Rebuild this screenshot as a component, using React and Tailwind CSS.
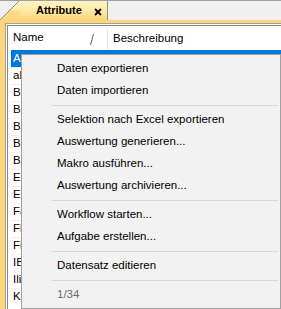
import { Fragment } from "react";

const rows = [
  "Abteilung",
  "alias",
  "Bearbeiter",
  "Bemerkung",
  "Benutzer",
  "Betreff",
  "Bezeichnung",
  "Eingang",
  "Evaluation",
  "Fachbereich",
  "Filiale",
  "Firma",
  "IBAN",
  "Ilias",
  "Kategorie",
];

const menu = [
  { label: "Daten exportieren" },
  { label: "Daten importieren" },
  { sep: true },
  { label: "Selektion nach Excel exportieren" },
  { label: "Auswertung generieren..." },
  { label: "Makro ausführen..." },
  { label: "Auswertung archivieren..." },
  { sep: true },
  { label: "Workflow starten..." },
  { label: "Aufgabe erstellen..." },
  { sep: true },
  { label: "Datensatz editieren" },
  { sep: true },
  { label: "1/34", disabled: true },
];

function App() {
  return (
    <Fragment>
      <div
        className="relative w-[281px] h-[309px] overflow-hidden bg-[#f0f0f0] flex flex-col text-[11.5px] text-black"
        style={{ fontFamily: '"Liberation Sans", Arial, sans-serif' }}
      >
        {/* tab strip */}
        <div className="flex h-[20px] shrink-0 border-t border-[#a0a0a0]">
          <svg width="20" height="19" viewBox="0 0 20 19" className="block shrink-0">
            <defs>
              <linearGradient id="tabg" x1="0" y1="0" x2="0" y2="1">
                <stop offset="0" stopColor="#fff3c4" />
                <stop offset="0.45" stopColor="#ffeaa8" />
                <stop offset="0.55" stopColor="#fedc88" />
                <stop offset="1" stopColor="#fdd67a" />
              </linearGradient>
            </defs>
            <polygon points="0,19 19,0 20,0 20,19" fill="url(#tabg)" />
            <line x1="0" y1="19" x2="19" y2="0" stroke="#8c8c8c" strokeWidth="1" />
          </svg>
          <div className="w-[88px] h-[19px] flex items-center bg-linear-to-b from-[#fff3c4] via-[#ffe8a4] to-[#fdd67a] border-r border-[#8c8c8c] pl-[16px]">
            <span className="font-bold text-[11px]">Attribute</span>
            <svg width="8" height="8" viewBox="0 0 8 8" className="ml-[12px] mt-[2px]">
              <path d="M1 1L7 7M7 1L1 7" stroke="#000" strokeWidth="1.8" />
            </svg>
          </div>
          <div className="flex-1" />
        </div>

        {/* yellow frame */}
        <div className="flex-1 bg-[#fdd67a] pt-[3px] pl-[5px] flex flex-col">
          <div className="flex-1 border-t border-l border-[#a0a0a0] bg-white pt-px pl-px flex flex-col">
            <div className="flex-1 border-t border-l border-[#828790] bg-white pl-[3px] flex flex-col">
              {/* header */}
              <div className="h-[24px] flex items-center shrink-0">
                <div className="w-[96px] h-full flex items-center pl-[2px] relative">
                  <span>Name</span>
                  <svg width="4" height="11" viewBox="0 0 4 11" className="absolute left-[79px] top-[8px]">
                    <line x1="3.5" y1="0" x2="0.5" y2="11" stroke="#606060" strokeWidth="1" />
                  </svg>
                </div>
                <div className="h-[21px] self-end border-l border-[#e5e5e5] pl-[5px] flex items-center -mt-[3px]">
                  <span className="-mt-[2px]">Beschreibung</span>
                </div>
              </div>
              {/* rows: only the first letters show left of the menu */}
              {rows.map((r, i) => (
                <div
                  key={i}
                  className={
                    i === 0
                      ? "h-[17px] shrink-0 flex items-center pl-[2px] bg-[#0078d7] text-white"
                      : "h-[17px] shrink-0 flex items-center pl-[2px] border-t border-[#f0f0f0]"
                  }
                >
                  <span className="w-[8px] overflow-hidden whitespace-nowrap">{r}</span>
                </div>
              ))}
            </div>
          </div>
        </div>

        {/* context menu */}
        <div className="absolute left-[21px] top-[54px] w-[260px] h-[255px] bg-[#f2f2f2] border border-[#a0a0a0] pt-[3px] pb-[2px] flex flex-col">
          {menu.map((m, i) =>
            m.sep ? (
              <div key={i} className="h-[7px] shrink-0 flex items-center pl-[30px] pr-[2px]">
                <div className="h-px w-full bg-[#d7d7d7]" />
              </div>
            ) : (
              <div
                key={i}
                className={
                  m.disabled
                    ? "h-[22px] shrink-0 flex items-center pl-[35px] text-[#6d6d6d]"
                    : "h-[22px] shrink-0 flex items-center pl-[35px]"
                }
              >
                {m.label}
              </div>
            )
          )}
        </div>
      </div>
    </Fragment>
  );
}

export default App;
